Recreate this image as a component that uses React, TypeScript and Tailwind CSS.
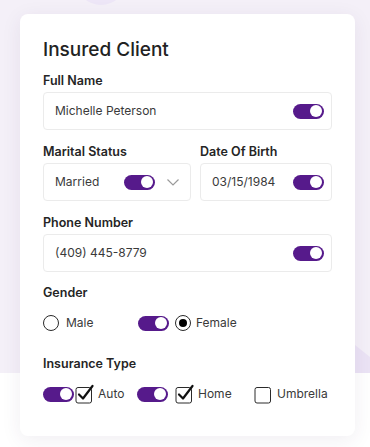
import React from "react";

function Toggle() {
  return (
    <span className="relative inline-flex h-[15px] w-[31px] shrink-0 items-center rounded-full bg-[#561a8b]">
      <span className="absolute right-[2px] h-[12px] w-[12px] rounded-full bg-white" />
    </span>
  );
}

function Radio({ checked }: { checked?: boolean }) {
  return (
    <span className="flex h-[16px] w-[16px] shrink-0 items-center justify-center rounded-full border border-[#2a2a2a] bg-white">
      {checked && <span className="h-[8px] w-[8px] rounded-full bg-black" />}
    </span>
  );
}

function Checkbox({ checked }: { checked?: boolean }) {
  return (
    <svg width="20" height="20" viewBox="0 0 20 20" className="shrink-0">
      <rect x="1" y="3.5" width="15.5" height="15.5" rx="2" fill="white" stroke="#2a2a2a" strokeWidth="1" />
      {checked && (
        <path d="M4 10.5 L8 14.5 L17.5 2" fill="none" stroke="#111" strokeWidth="2.2" strokeLinecap="round" strokeLinejoin="round" />
      )}
    </svg>
  );
}

function Label({ children }: { children: React.ReactNode }) {
  return <div className="h-[17px] text-[12.5px] font-semibold leading-[17px] text-[#252525]">{children}</div>;
}

export default function App() {
  return (
    <div
      className="relative h-[447px] w-[370px] overflow-hidden bg-white"
      style={{ fontFamily: "Inter, 'Noto Sans', sans-serif" }}
    >
      <div className="absolute left-0 top-0 h-[373px] w-full bg-[#f4f0f8]" />
      <div className="absolute left-[76px] top-[-45px] h-[50px] w-[50px] rounded-full bg-[#ede6f7]" />
      <div className="absolute left-[330px] top-[325px] h-[48px] w-[60px] bg-[#ebe3f5] [clip-path:polygon(0_0,100%_100%,0_100%)]" />
      <div className="relative pl-[20px] pt-[14px]">
        <div className="w-[335px] rounded-[8px] bg-white px-[23px] pb-[32px] pt-[24px] shadow-[0_4px_20px_rgba(60,40,90,0.08)]">
          <div className="h-[24px] text-[19px] font-medium leading-[24px] text-[#222]">Insured Client</div>

          <div className="mt-[10px]">
            <Label>Full Name</Label>
            <div className="mt-[3px] flex h-[38px] items-center justify-between rounded-[4px] border border-[#ebebeb] pl-[11px] pr-[7px]">
              <span className="text-[12px] text-[#3a3a3a]">Michelle Peterson</span>
              <Toggle />
            </div>
          </div>

          <div className="mt-[13px] flex gap-[9px]">
            <div className="w-[148px]">
              <Label>Marital Status</Label>
              <div className="mt-[3px] flex h-[38px] items-center rounded-[4px] border border-[#ebebeb] pl-[11px] pr-[10px]">
                <span className="flex-1 text-[12px] text-[#3a3a3a]">Married</span>
                <Toggle />
                <svg width="14" height="10" viewBox="0 0 14 10" className="ml-[11px]">
                  <path d="M1.5 2.5 L7 8 L12.5 2.5" fill="none" stroke="#9a9a9a" strokeWidth="1.2" />
                </svg>
              </div>
            </div>
            <div className="flex-1">
              <Label>Date Of Birth</Label>
              <div className="mt-[3px] flex h-[38px] items-center justify-between rounded-[4px] border border-[#ebebeb] pl-[11px] pr-[7px]">
                <span className="text-[12px] text-[#3a3a3a]">03/15/1984</span>
                <Toggle />
              </div>
            </div>
          </div>

          <div className="mt-[13px]">
            <Label>Phone Number</Label>
            <div className="mt-[3px] flex h-[38px] items-center justify-between rounded-[4px] border border-[#ebebeb] pl-[11px] pr-[7px]">
              <span className="text-[12px] text-[#3a3a3a]">(409) 445-8779</span>
              <Toggle />
            </div>
          </div>

          <div className="mt-[12px]">
            <Label>Gender</Label>
            <div className="mt-[12px] flex h-[20px] items-center text-[12px] text-[#3a3a3a]">
              <Radio />
              <span className="ml-[7px] w-[72px]">Male</span>
              <Toggle />
              <span className="ml-[6px]"><Radio checked /></span>
              <span className="ml-[5px]">Female</span>
            </div>
          </div>

          <div className="mt-[22px]">
            <Label>Insurance Type</Label>
            <div className="mt-[12px] flex h-[20px] items-center text-[12px] text-[#3a3a3a]">
              <Toggle />
              <span className="ml-[1px]"><Checkbox checked /></span>
              <span className="ml-[3px] w-[39px]">Auto</span>
              <Toggle />
              <span className="ml-[7px]"><Checkbox checked /></span>
              <span className="ml-[3px] w-[56px]">Home</span>
              <Checkbox />
              <span className="ml-[3px]">Umbrella</span>
            </div>
          </div>
        </div>
      </div>
    </div>
  );
}
